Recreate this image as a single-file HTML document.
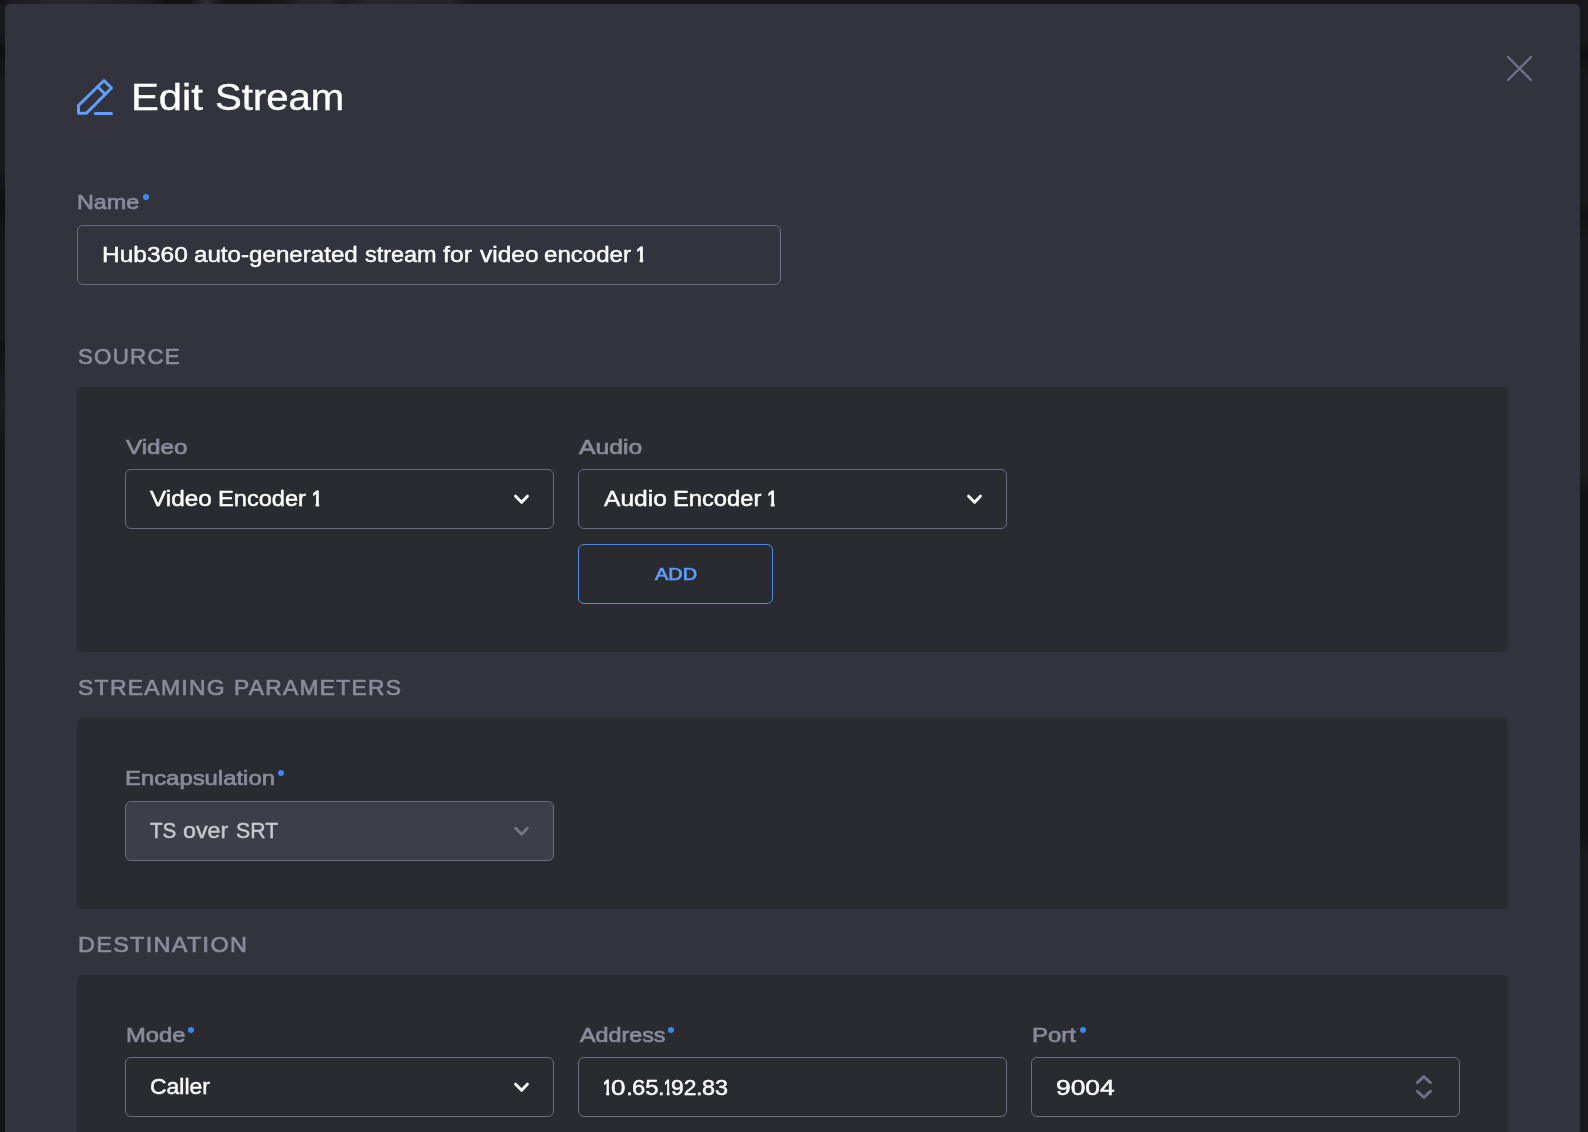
<!DOCTYPE html>
<html><head><meta charset="utf-8"><title>Edit Stream</title>
<style>
html,body{margin:0;padding:0;}
body{width:1588px;height:1132px;overflow:hidden;background:#19191d;position:relative;font-family:"Liberation Sans", sans-serif;}
.abs{position:absolute;box-sizing:border-box;}
.modal{left:5px;top:4px;width:1575px;height:1200px;background:#32333d;border-radius:5px;}
.panel{background:#2a2b31;border-radius:6px;left:77px;width:1431px;}
.box{border:1px solid #6a6c80;border-radius:6px;height:60px;}
.t{position:absolute;white-space:nowrap;line-height:1.117;margin:0;padding:0;transform-origin:0 0;}
.tl{position:absolute;left:0;top:0;width:1588px;height:1132px;will-change:transform;}
.dot{position:absolute;width:6.2px;height:6.2px;border-radius:50%;background:#3b8af5;}
svg{position:absolute;overflow:visible;}
</style></head><body>
<div class="abs" style="left:0;top:0;width:1588px;height:5px;background:linear-gradient(to right,#141416 0,#1c1c20 12px,#25252a 50px,#24242a 90px,#1d1d21 150px,#131315 165px,#131315 190px,#2e2e33 207px,#151517 222px,#151517 262px,#19191c 285px,#25252a 300px,#25252a 325px,#1b1b1e 345px,#25252a 370px,#232327 450px,#19191d 466px,#19191d 100%)"></div>
<div class="abs" style="left:0;top:4px;width:6px;height:1128px;background:linear-gradient(to bottom,#19191d 0,#19191d 30px,#0f0f11 48px,#19191d 75px,#19191d 165px,#0e0e10 200px,#18181c 240px,#18181c 330px,#121214 345px,#18181b 370px,#1c1c20 400px,#161619 440px,#131316 700px,#131316 100%)"></div>
<div class="abs" style="left:1579px;top:4px;width:9px;height:1128px;background:linear-gradient(to bottom,#19191d 0,#19191d 36px,#0f0f11 50px,#19191d 72px,#19191d 195px,#111113 212px,#19191d 235px,#1b1b1f 400px,#1b1b1f 470px,#121214 492px,#121214 830px,#1a1a1e 852px,#1a1a1e 100%)"></div>
<div class="abs modal"></div>
<!-- panels -->
<div class="abs panel" style="top:387px;height:265px;"></div>
<div class="abs panel" style="top:718px;height:191px;"></div>
<div class="abs panel" style="top:975px;height:200px;"></div>
<!-- inputs -->
<div class="abs box" style="left:77px;top:225px;width:704px;"></div>
<div class="abs box" style="left:125px;top:469px;width:429px;"></div>
<div class="abs box" style="left:578px;top:469px;width:429px;"></div>
<div class="abs box" style="left:578px;top:544px;width:195px;border-color:#4a8ce8;"></div>
<div class="abs box" style="left:125px;top:801px;width:429px;background:#3d3e4a;"></div>
<div class="abs box" style="left:125px;top:1057px;width:429px;"></div>
<div class="abs box" style="left:578px;top:1057px;width:429px;"></div>
<div class="abs box" style="left:1031px;top:1057px;width:429px;"></div>
<!-- icons -->
<svg style="left:77px;top:79px" width="36" height="36" viewBox="0 0 36 36" fill="none" stroke="#5f9ffa" stroke-width="3" stroke-linejoin="round" stroke-linecap="round">
<path d="M27 1.5 L34.5 9 L9.4 34.3 H1.5 V26.5 Z"/><path d="M20.7 7.8 L28.2 15.3"/><path d="M18.4 34.5 H34.5"/></svg>
<svg style="left:1507.1px;top:56.1px" width="25" height="25" viewBox="0 0 25 25" fill="none" stroke="#707186" stroke-width="2.4" stroke-linecap="round"><path d="M1 1 L24 24 M24 1 L1 24"/></svg>
<!-- chevrons -->
<svg style="left:513.5px;top:494px" width="16" height="11" viewBox="0 0 16 11" fill="none" stroke="#ffffff" stroke-width="2.9" stroke-linecap="round" stroke-linejoin="round"><path d="M1.6 2.15 L7.6 8.35 L13.4 2.15"/></svg>
<svg style="left:966.5px;top:494px" width="16" height="11" viewBox="0 0 16 11" fill="none" stroke="#ffffff" stroke-width="2.9" stroke-linecap="round" stroke-linejoin="round"><path d="M1.6 2.15 L7.6 8.35 L13.4 2.15"/></svg>
<svg style="left:513.5px;top:826px" width="16" height="11" viewBox="0 0 16 11" fill="none" stroke="#767782" stroke-width="2.8" stroke-linecap="round" stroke-linejoin="round"><path d="M1.6 2.2 L7.6 8.2 L13.4 2.2"/></svg>
<svg style="left:513.5px;top:1082px" width="16" height="11" viewBox="0 0 16 11" fill="none" stroke="#ffffff" stroke-width="2.9" stroke-linecap="round" stroke-linejoin="round"><path d="M1.6 2.15 L7.6 8.35 L13.4 2.15"/></svg>
<!-- spinner -->
<svg style="left:1415.5px;top:1075px" width="17" height="24" viewBox="0 0 17 24" fill="none" stroke="#707187" stroke-width="2.8" stroke-linecap="round" stroke-linejoin="round"><path d="M1.3 7.6 L7.9 1.65 L14.45 7.6"/><path d="M1.3 16.2 L7.9 22.5 L14.45 16.2"/></svg>
<!-- required dots -->
<div class="dot" style="left:142.85px;top:194.15px"></div>
<div class="dot" style="left:278px;top:770px"></div>
<div class="dot" style="left:187.9px;top:1027px"></div>
<div class="dot" style="left:667.9px;top:1026.9px"></div>
<div class="dot" style="left:1079.9px;top:1027px"></div>
<div class="tl">
<div class="t" style="left:131.47px;top:77.69px;font-size:36.5px;color:#ffffff;-webkit-text-stroke:0.4px #ffffff;transform:scaleX(1.1434)">Edit</div>
<div class="t" style="left:214.76px;top:77.69px;font-size:36.5px;color:#ffffff;-webkit-text-stroke:0.4px #ffffff;transform:scaleX(1.0986)">Stream</div>
<div class="t" style="left:77.46px;top:189.99px;font-size:21px;color:#8a8b9a;-webkit-text-stroke:0.7px #8a8b9a;transform:scaleX(1.1123)">Name</div>
<div class="t" style="left:102.44px;top:242.69px;font-size:22px;color:#ffffff;-webkit-text-stroke:0.45px #ffffff;transform:scaleX(1.1139)">Hub360</div>
<div class="t" style="left:194.46px;top:242.69px;font-size:22px;color:#ffffff;-webkit-text-stroke:0.45px #ffffff;transform:scaleX(1.0974)">auto-generated</div>
<div class="t" style="left:364.86px;top:242.69px;font-size:22px;color:#ffffff;-webkit-text-stroke:0.45px #ffffff;transform:scaleX(1.0650)">stream</div>
<div class="t" style="left:443.38px;top:242.69px;font-size:22px;color:#ffffff;-webkit-text-stroke:0.45px #ffffff;transform:scaleX(1.1317)">for</div>
<div class="t" style="left:479.51px;top:242.69px;font-size:22px;color:#ffffff;-webkit-text-stroke:0.45px #ffffff;transform:scaleX(1.1121)">video</div>
<div class="t" style="left:543.74px;top:242.69px;font-size:22px;color:#ffffff;-webkit-text-stroke:0.45px #ffffff;transform:scaleX(1.0932)">encoder</div>
<div class="t" style="left:636.45px;top:242.69px;font-size:22px;color:#ffffff;-webkit-text-stroke:0.95px #ffffff;clip-path:polygon(0 0,8.7px 0,8.7px 19.85px,4.3px 19.85px,4.3px 16.1px,0 16.1px);transform:scaleX(0.8408)">1</div>
<div class="t" style="left:77.69px;top:344.89px;font-size:21.5px;color:#8a8b99;-webkit-text-stroke:0.7px #8a8b99;letter-spacing:1.2px;transform:scaleX(1.0373)">SOURCE</div>
<div class="t" style="left:126.29px;top:434.99px;font-size:21px;color:#8a8b9a;-webkit-text-stroke:0.7px #8a8b9a;transform:scaleX(1.1537)">Video</div>
<div class="t" style="left:150.30px;top:486.99px;font-size:22px;color:#ffffff;-webkit-text-stroke:0.45px #ffffff;transform:scaleX(1.1051)">Video</div>
<div class="t" style="left:218.20px;top:486.99px;font-size:22px;color:#ffffff;-webkit-text-stroke:0.45px #ffffff;transform:scaleX(1.0734)">Encoder</div>
<div class="t" style="left:312.06px;top:486.99px;font-size:22px;color:#ffffff;-webkit-text-stroke:0.95px #ffffff;clip-path:polygon(0 0,8.7px 0,8.7px 19.85px,4.3px 19.85px,4.3px 16.1px,0 16.1px);transform:scaleX(0.8344)">1</div>
<div class="t" style="left:579.35px;top:434.99px;font-size:21px;color:#8a8b9a;-webkit-text-stroke:0.7px #8a8b9a;transform:scaleX(1.1769)">Audio</div>
<div class="t" style="left:603.50px;top:486.99px;font-size:22px;color:#ffffff;-webkit-text-stroke:0.45px #ffffff;transform:scaleX(1.1174)">Audio</div>
<div class="t" style="left:672.55px;top:486.99px;font-size:22px;color:#ffffff;-webkit-text-stroke:0.45px #ffffff;transform:scaleX(1.0778)">Encoder</div>
<div class="t" style="left:766.53px;top:486.99px;font-size:22px;color:#ffffff;-webkit-text-stroke:0.95px #ffffff;clip-path:polygon(0 0,8.7px 0,8.7px 19.85px,4.3px 19.85px,4.3px 16.1px,0 16.1px);transform:scaleX(0.8790)">1</div>
<div class="t" style="left:655.32px;top:564.69px;font-size:17px;color:#5c9ffa;-webkit-text-stroke:0.7px #5c9ffa;transform:scaleX(1.1715)">ADD</div>
<div class="t" style="left:77.67px;top:675.89px;font-size:21.5px;color:#8a8b99;-webkit-text-stroke:0.7px #8a8b99;letter-spacing:1.2px;transform:scaleX(1.0671)">STREAMING</div>
<div class="t" style="left:233.77px;top:675.89px;font-size:21.5px;color:#8a8b99;-webkit-text-stroke:0.7px #8a8b99;letter-spacing:1.2px;transform:scaleX(1.0607)">PARAMETERS</div>
<div class="t" style="left:125.43px;top:765.99px;font-size:21px;color:#8a8b9a;-webkit-text-stroke:0.7px #8a8b9a;transform:scaleX(1.1364)">Encapsulation</div>
<div class="t" style="left:150.32px;top:818.99px;font-size:22px;color:#c9c9cf;-webkit-text-stroke:0.45px #c9c9cf;transform:scaleX(0.9367)">TS</div>
<div class="t" style="left:183.32px;top:818.99px;font-size:22px;color:#c9c9cf;-webkit-text-stroke:0.45px #c9c9cf;transform:scaleX(1.0571)">over</div>
<div class="t" style="left:235.64px;top:818.99px;font-size:22px;color:#c9c9cf;-webkit-text-stroke:0.45px #c9c9cf;transform:scaleX(0.9659)">SRT</div>
<div class="t" style="left:77.63px;top:933.09px;font-size:21.5px;color:#8a8b99;-webkit-text-stroke:0.7px #8a8b99;letter-spacing:1.2px;transform:scaleX(1.0896)">DESTINATION</div>
<div class="t" style="left:125.59px;top:1022.99px;font-size:21px;color:#8a8b9a;-webkit-text-stroke:0.7px #8a8b9a;transform:scaleX(1.1301)">Mode</div>
<div class="t" style="left:150.26px;top:1075.49px;font-size:22px;color:#ffffff;-webkit-text-stroke:0.45px #ffffff;transform:scaleX(1.0433)">Caller</div>
<div class="t" style="left:579.68px;top:1022.99px;font-size:21px;color:#8a8b9a;-webkit-text-stroke:0.7px #8a8b9a;transform:scaleX(1.1088)">Address</div>
<div class="t" style="left:603.43px;top:1075.69px;font-size:22px;color:#ffffff;-webkit-text-stroke:0.95px #ffffff;clip-path:polygon(0 0,8.7px 0,8.7px 19.85px,4.3px 19.85px,4.3px 16.1px,0 16.1px);transform:scaleX(0.7261)">1</div>
<div class="t" style="left:611.40px;top:1075.69px;font-size:22px;color:#ffffff;-webkit-text-stroke:0.45px #ffffff;transform:scaleX(1.1790)">0</div>
<div class="t" style="left:625.66px;top:1075.69px;font-size:22px;color:#ffffff;-webkit-text-stroke:0.45px #ffffff;transform:scaleX(1.1245)">.</div>
<div class="t" style="left:631.66px;top:1075.69px;font-size:22px;color:#ffffff;-webkit-text-stroke:0.45px #ffffff;transform:scaleX(1.0821)">65</div>
<div class="t" style="left:657.78px;top:1075.69px;font-size:22px;color:#ffffff;-webkit-text-stroke:0.45px #ffffff;transform:scaleX(1.0519)">.</div>
<div class="t" style="left:663.98px;top:1075.69px;font-size:22px;color:#ffffff;-webkit-text-stroke:0.95px #ffffff;clip-path:polygon(0 0,8.7px 0,8.7px 19.85px,4.3px 19.85px,4.3px 16.1px,0 16.1px);transform:scaleX(0.6497)">1</div>
<div class="t" style="left:670.57px;top:1075.69px;font-size:22px;color:#ffffff;-webkit-text-stroke:0.45px #ffffff;transform:scaleX(1.0374)">92</div>
<div class="t" style="left:695.75px;top:1075.69px;font-size:22px;color:#ffffff;-webkit-text-stroke:0.45px #ffffff;transform:scaleX(1.0701)">.</div>
<div class="t" style="left:701.96px;top:1075.69px;font-size:22px;color:#ffffff;-webkit-text-stroke:0.45px #ffffff;transform:scaleX(1.0621)">83</div>
<div class="t" style="left:1031.83px;top:1022.99px;font-size:21px;color:#8a8b9a;-webkit-text-stroke:0.7px #8a8b9a;transform:scaleX(1.1368)">Port</div>
<div class="t" style="left:1056.24px;top:1075.69px;font-size:22px;color:#ffffff;-webkit-text-stroke:0.45px #ffffff;transform:scaleX(1.1999)">9004</div>
</div>
</body></html>
